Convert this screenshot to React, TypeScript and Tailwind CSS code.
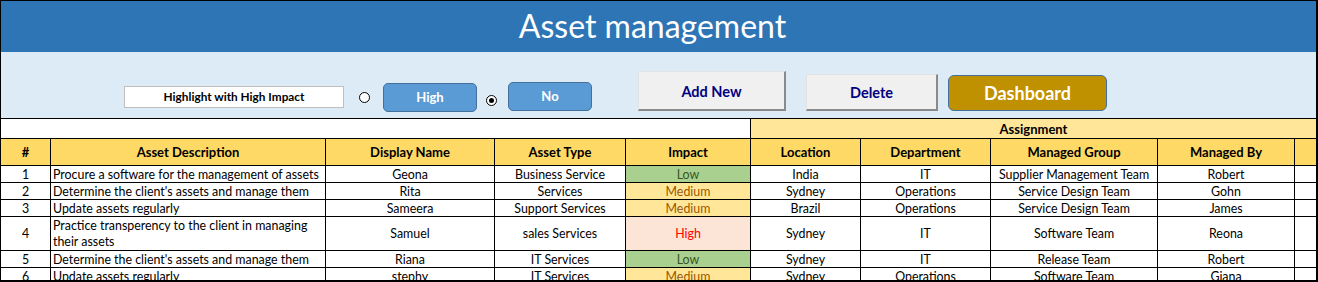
import React from 'react';

type Impact = 'Low' | 'Medium' | 'High';

type Row = {
  id: number;
  desc: React.ReactNode;
  name: string;
  type: string;
  impact: Impact;
  location: string;
  dept: string;
  group: string;
  by: string;
  tall?: boolean;
};

const rows: Row[] = [
  { id: 1, desc: 'Procure a software for the management of assets', name: 'Geona', type: 'Business Service', impact: 'Low', location: 'India', dept: 'IT', group: 'Supplier Management Team', by: 'Robert' },
  { id: 2, desc: "Determine the client's assets and manage them", name: 'Rita', type: 'Services', impact: 'Medium', location: 'Sydney', dept: 'Operations', group: 'Service Design Team', by: 'Gohn' },
  { id: 3, desc: 'Update assets regularly', name: 'Sameera', type: 'Support Services', impact: 'Medium', location: 'Brazil', dept: 'Operations', group: 'Service Design Team', by: 'James' },
  {
    id: 4,
    desc: (
      <>
        Practice transperency to the client in managing
        <br />
        their assets
      </>
    ),
    name: 'Samuel',
    type: 'sales Services',
    impact: 'High',
    location: 'Sydney',
    dept: 'IT',
    group: 'Software Team',
    by: 'Reona',
    tall: true,
  },
  { id: 5, desc: "Determine the client's assets and manage them", name: 'Riana', type: 'IT Services', impact: 'Low', location: 'Sydney', dept: 'IT', group: 'Release Team', by: 'Robert' },
  { id: 6, desc: 'Update assets regularly', name: 'stephy', type: 'IT Services', impact: 'Medium', location: 'Sydney', dept: 'Operations', group: 'Software Team', by: 'Giana' },
];

const impactStyle: Record<Impact, string> = {
  Low: 'bg-[#a9d08e] text-[#375623]',
  Medium: 'bg-[#ffe699] text-[#9c5700]',
  High: 'bg-[#fce4d6] text-[#ff0000]',
};

const headers = ['#', 'Asset Description', 'Display Name', 'Asset Type', 'Impact', 'Location', 'Department', 'Managed Group', 'Managed By'];

const cell = 'flex items-center justify-center border-r border-b border-black';

const Radio = ({ checked }: { checked?: boolean }) => (
  <div className="flex h-[11px] w-[11px] items-center justify-center rounded-full border border-black bg-white">
    {checked && <div className="h-[5px] w-[5px] rounded-full bg-black" />}
  </div>
);

const App = () => {
  return (
    <div className="h-[282px] w-[1318px] overflow-hidden border-t border-l border-r-2 border-b-2 border-black bg-white font-['Lato',sans-serif] text-black">
      {/* title */}
      <div className="flex h-[51px] items-center justify-center bg-[#2e75b6] pr-[12px] pb-[2px] text-[32px] text-white">
        Asset management
      </div>

      {/* controls */}
      <div className="flex h-[66px] items-start bg-[#ddebf7] pl-[123px]">
        <div className="mt-[34px] flex h-[22px] w-[220px] items-center justify-center border border-[#bfbfbf] bg-white text-[11.8px] font-bold">
          Highlight with High Impact
        </div>
        <div className="ml-[15px] mt-[40px]">
          <Radio />
        </div>
        <div className="ml-[13px] mt-[31px] flex h-[29px] w-[94px] items-center justify-center rounded-[5px] border border-[#41719c] bg-[#5b9bd5] text-[13px] font-bold text-white">
          High
        </div>
        <div className="ml-[9px] mt-[43px]">
          <Radio checked />
        </div>
        <div className="ml-[11px] mt-[30px] flex h-[29px] w-[84px] items-center justify-center rounded-[5px] border border-[#41719c] bg-[#5b9bd5] text-[13px] font-bold text-white">
          No
        </div>
        <button className="ml-[46px] mt-[19px] flex h-[40px] w-[148px] items-center justify-center border-t border-l border-r-2 border-b-2 border-t-[#e3e3e3] border-l-[#e3e3e3] border-r-[#8a8a8a] border-b-[#8a8a8a] bg-[#f0f0f0] pt-[3px] text-[14.5px] font-bold text-[#000080]">
          Add New
        </button>
        <button className="ml-[20px] mt-[22px] flex h-[37px] w-[132px] items-center justify-center border-t border-l border-r-2 border-b-2 border-t-[#e3e3e3] border-l-[#e3e3e3] border-r-[#8a8a8a] border-b-[#8a8a8a] bg-[#f0f0f0] pt-[1px] text-[14.5px] font-bold text-[#000080]">
          Delete
        </button>
        <button className="ml-[10px] mt-[23px] flex h-[36px] w-[159px] items-center justify-center rounded-[6px] border border-[#41719c] bg-[#bf9000] pt-[1px] text-[18px] font-bold text-white">
          Dashboard
        </button>
      </div>

      {/* table */}
      <div className="grid grid-cols-[50px_275px_169px_131px_125px_110px_130px_167px_137px_1fr] border-t border-black text-[12.4px] leading-[16px]">
        <div className="col-span-5 h-[20px] border-r border-b border-black" />
        <div className="col-span-5 flex h-[20px] items-center justify-center border-b border-black bg-[#ffe699] text-[13px] font-bold">
          Assignment
        </div>

        {headers.map((h) => (
          <div key={h} className={`${cell} h-[27px] bg-[#ffd966] text-[13px] font-bold`}>
            {h}
          </div>
        ))}
        <div className="h-[27px] border-b border-black bg-[#ffd966]" />

        {rows.map((r) => {
          const h = r.tall ? 'h-[34px]' : 'h-[17px]';
          return (
            <React.Fragment key={r.id}>
              <div className={`${cell} ${h} pt-[1px]`}>{r.id}</div>
              <div className={`flex ${h} items-center border-r border-b border-black pl-[2px] pt-[1px]`}>
                <span>{r.desc}</span>
              </div>
              <div className={`${cell} ${h} pt-[1px]`}>{r.name}</div>
              <div className={`${cell} ${h} pt-[1px]`}>{r.type}</div>
              <div className={`${cell} ${h} pt-[1px] ${impactStyle[r.impact]}`}>{r.impact}</div>
              <div className={`${cell} ${h} pt-[1px]`}>{r.location}</div>
              <div className={`${cell} ${h} pt-[1px]`}>{r.dept}</div>
              <div className={`${cell} ${h} pt-[1px]`}>{r.group}</div>
              <div className={`${cell} ${h} pt-[1px]`}>{r.by}</div>
              <div className={`${h} border-b border-black`} />
            </React.Fragment>
          );
        })}
      </div>
    </div>
  );
};

export default App;
